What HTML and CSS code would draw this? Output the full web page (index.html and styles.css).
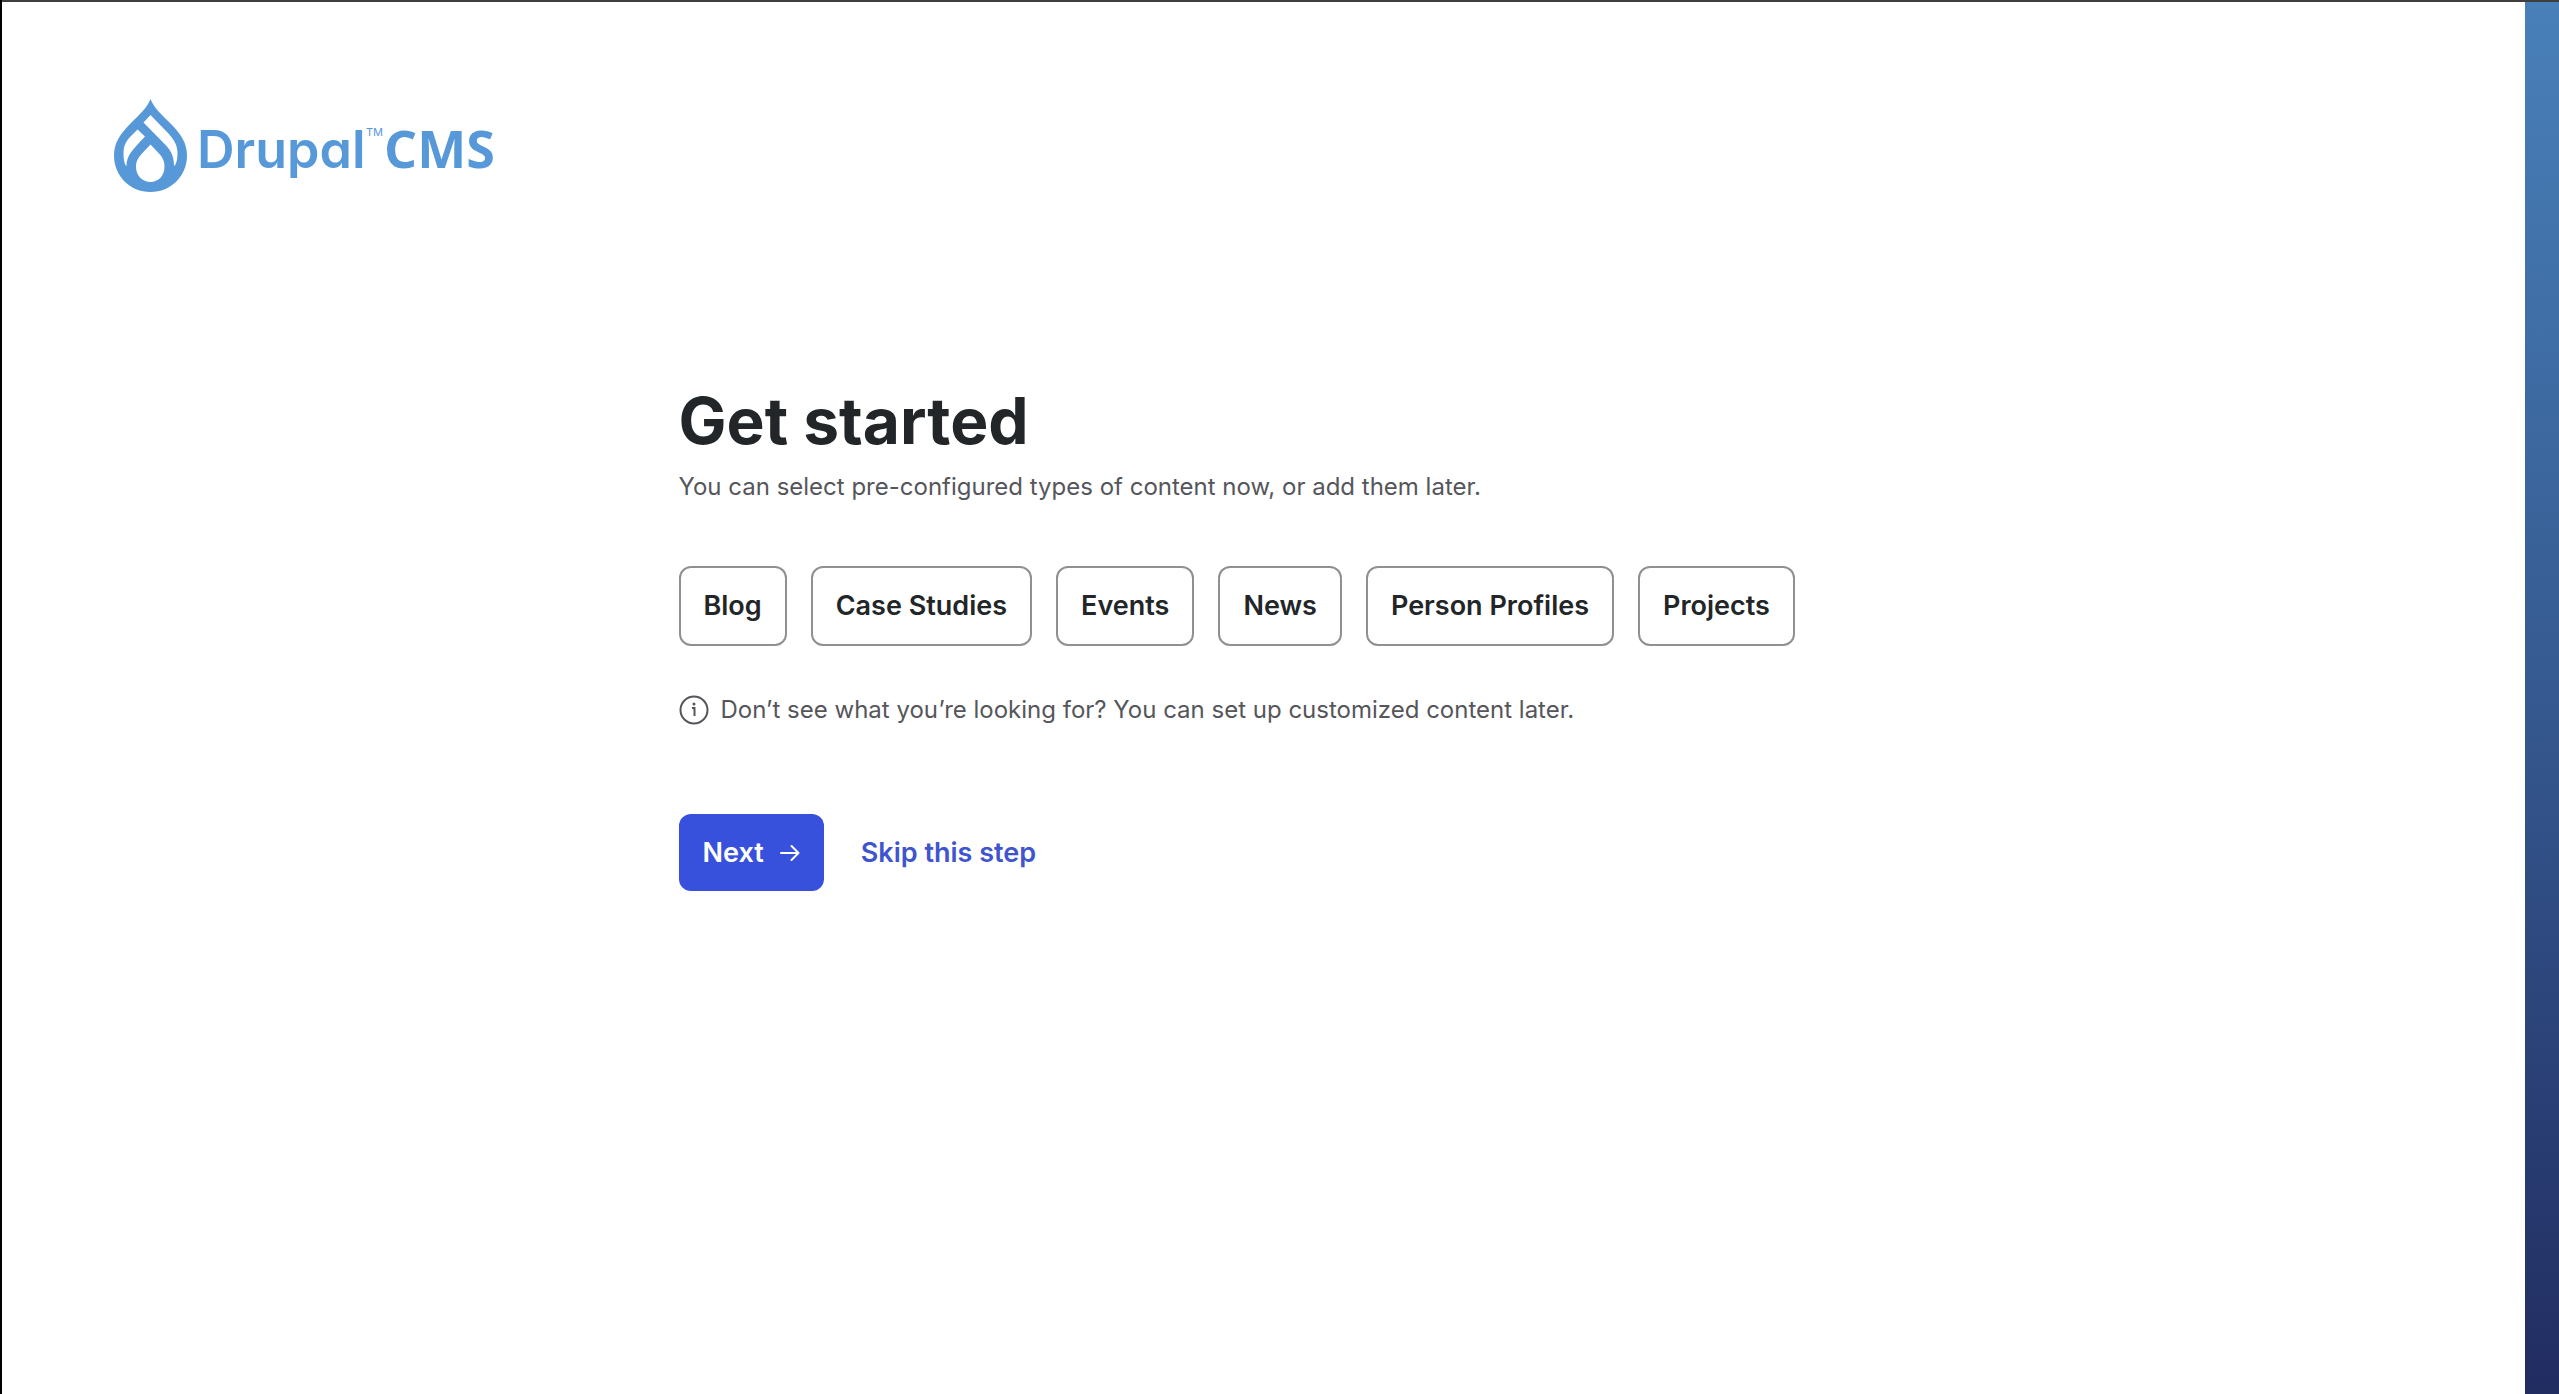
FILE: index.html
```html
<!DOCTYPE html>
<html lang="en">
<head>
    <meta charset="UTF-8">
    <meta name="viewport" content="width=device-width, initial-scale=1.0">
    <title>Get started | Drupal CMS</title>
    <link rel="stylesheet" href="styles.css">
</head>
<body>
    <div class="page">
        <header class="header">
            <svg class="logo" viewBox="0 0 384 96" role="img" aria-label="Drupal CMS">
                <path fill-rule="evenodd" d="M37.5 1C41 10 48 16 57 25C68 36 74 45 74 57.5C74 78 58 94 37.5 94C17 94 1 78 1 57.5C1 45 7 36 18 25C27 16 34 10 37.5 1Z
                    M37.5 17L30.5 24.5L53.5 48C59 54 61 60 61 68C63.500 66.500 64.5 61 64.5 55C64.5 46 60 40 53 33Z
                    M24.5 31.5L17 39C12 44.500 10.500 49 10.500 55.5C10.500 61 11.500 67 13.500 68C13.500 58 19 52 32 38.5Z
                    M37.500 46.5L29 55.5C24.500 60.5 23 64 23 69C23 77.5 29.5 84 37.5 84C45.5 84 51.5 77.5 51.5 69C51.5 64 50.5 60.5 46 55.5Z"/>
                <text class="logo-name" x="84" y="70">Drupal</text>
                <text class="logo-tm" x="253" y="38">TM</text>
                <text class="logo-cms" x="271" y="70">CMS</text>
            </svg>
        </header>

        <main class="content">
            <h1>Get started</h1>
            <p class="intro">You can select pre-configured types of content now, or add them later.</p>

            <form id="recipes-form">
                <div class="options">
                    <button type="button" class="option">Blog</button>
                    <button type="button" class="option">Case Studies</button>
                    <button type="button" class="option">Events</button>
                    <button type="button" class="option">News</button>
                    <button type="button" class="option">Person Profiles</button>
                    <button type="button" class="option">Projects</button>
                </div>

                <p class="hint">
                    <svg class="hint-icon" viewBox="0 0 30 30" aria-hidden="true">
                        <circle cx="15" cy="15" r="13.5"/>
                        <path d="M13 13H15.5V21"/>
                        <circle class="dot" cx="15" cy="9" r="1.5"/>
                    </svg>
                    <span>Don’t see what you’re looking for? You can set up customized content later.</span>
                </p>

                <div class="actions">
                    <button type="submit" class="next-btn">
                        Next
                        <svg class="arrow" viewBox="0 0 20 18" aria-hidden="true">
                            <path d="M1 9H18.5M11.5 2L18.5 9L11.5 16"/>
                        </svg>
                    </button>
                    <a href="#" class="skip-link">Skip this step</a>
                </div>
            </form>
        </main>
    </div>
    <div class="side-strip"></div>
</body>
</html>
```
FILE: styles.css
```css
* {
    box-sizing: border-box;
}
body {
    margin: 0;
    min-height: 100vh;
    display: flex;
    border-left: 2px solid #000;
    background: #fff;
    color: #222628;
    font-family: Inter, sans-serif;
}
.page {
    flex: 1;
    border-top: 2px solid #403d3d;
}
.header {
    padding: 96px 111px 0;
}
.logo {
    display: block;
    width: 384px;
    height: 96px;
    fill: #5799d8;
}
.logo-name {
    font-size: 52px;
    font-weight: 600;
    font-feature-settings: "cv11";
}
.logo-tm {
    font-size: 11px;
}
.logo-cms {
    font-family: "Open Sans", sans-serif;
    font-size: 52px;
    font-weight: 700;
}
.content {
    max-width: 1170px;
    margin: 0 auto;
    padding: 187px 0 64px;
}
h1 {
    margin: 0;
    font-size: 64px;
    font-weight: 700;
    line-height: 80px;
}
p {
    margin: 0;
    color: #55565b;
    font-size: 24px;
    line-height: 32px;
}
.intro {
    margin-top: 10px;
}
.options {
    display: flex;
    flex-wrap: wrap;
    gap: 24px;
    margin-top: 63px;
}
.option {
    padding: 22px 23px;
    border: 2px solid #8e9091;
    border-radius: 12px;
    background: #fff;
    color: inherit;
    font-family: inherit;
    font-size: 27px;
    font-weight: 600;
    line-height: 32px;
    cursor: pointer;
}
.hint {
    display: flex;
    align-items: center;
    gap: 12px;
    margin-top: 48px;
}
.hint-icon {
    width: 30px;
    height: 30px;
    fill: none;
    stroke: #55565b;
    stroke-width: 2;
}
.hint-icon .dot {
    fill: #55565b;
    stroke: none;
}
.actions {
    display: flex;
    align-items: center;
    gap: 37px;
    margin-top: 88px;
}
.next-btn {
    display: flex;
    align-items: center;
    gap: 16px;
    padding: 22px 24px;
    border: none;
    border-radius: 12px;
    background: #3851dd;
    color: #fff;
    font-family: inherit;
    font-size: 27px;
    font-weight: 600;
    line-height: 33px;
    cursor: pointer;
}
.arrow {
    width: 20px;
    height: 18px;
    fill: none;
    stroke: #fff;
    stroke-width: 2;
    stroke-linecap: round;
    stroke-linejoin: round;
}
.skip-link {
    color: #3f55cf;
    font-size: 27px;
    font-weight: 600;
    line-height: 33px;
    text-decoration: none;
}
.side-strip {
    width: 34px;
    border-top: 2px solid #403d3d;
    background: linear-gradient(#4980b9, #355990 50%, #212c61);
}
```
